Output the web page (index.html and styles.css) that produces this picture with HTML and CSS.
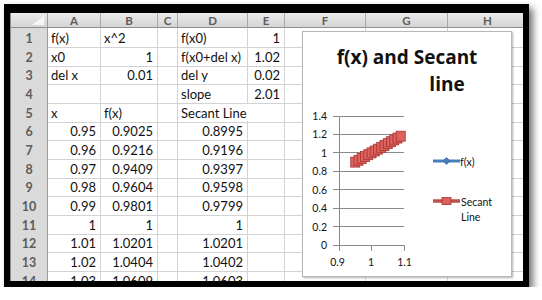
FILE: index.html
```html
<!DOCTYPE html>
<html lang="en">

<head>
    <meta charset="UTF-8">
    <title>f(x) and Secant line</title>
    <link rel="stylesheet" href="styles.css">
</head>

<body>
    <div class="frame">
        <div class="sheet">
            <div class="row head">
                <div class="corner"></div><div>A</div><div>B</div><div>C</div><div>D</div><div>E</div><div>F</div><div>G</div><div>H</div>
            </div>
            <div class="row">
                <div class="num">1</div><div>f(x)</div><div>x^2</div><div></div><div>f(x0)</div><div class="r">1</div><div></div><div></div><div></div>
            </div>
            <div class="row">
                <div class="num">2</div><div>x0</div><div class="r">1</div><div></div><div>f(x0+del x)</div><div class="r">1.02</div><div></div><div></div><div></div>
            </div>
            <div class="row">
                <div class="num">3</div><div>del x</div><div class="r">0.01</div><div></div><div>del y</div><div class="r">0.02</div><div></div><div></div><div></div>
            </div>
            <div class="row">
                <div class="num">4</div><div></div><div></div><div></div><div>slope</div><div class="r">2.01</div><div></div><div></div><div></div>
            </div>
            <div class="row">
                <div class="num">5</div><div>x</div><div>f(x)</div><div></div><div class="spill">Secant Line</div><div></div><div></div><div></div><div></div>
            </div>
            <div class="row">
                <div class="num">6</div><div class="r">0.95</div><div class="r">0.9025</div><div></div><div class="r">0.8995</div><div></div><div></div><div></div><div></div>
            </div>
            <div class="row">
                <div class="num">7</div><div class="r">0.96</div><div class="r">0.9216</div><div></div><div class="r">0.9196</div><div></div><div></div><div></div><div></div>
            </div>
            <div class="row">
                <div class="num">8</div><div class="r">0.97</div><div class="r">0.9409</div><div></div><div class="r">0.9397</div><div></div><div></div><div></div><div></div>
            </div>
            <div class="row">
                <div class="num">9</div><div class="r">0.98</div><div class="r">0.9604</div><div></div><div class="r">0.9598</div><div></div><div></div><div></div><div></div>
            </div>
            <div class="row">
                <div class="num">10</div><div class="r">0.99</div><div class="r">0.9801</div><div></div><div class="r">0.9799</div><div></div><div></div><div></div><div></div>
            </div>
            <div class="row">
                <div class="num">11</div><div class="r">1</div><div class="r">1</div><div></div><div class="r">1</div><div></div><div></div><div></div><div></div>
            </div>
            <div class="row">
                <div class="num">12</div><div class="r">1.01</div><div class="r">1.0201</div><div></div><div class="r">1.0201</div><div></div><div></div><div></div><div></div>
            </div>
            <div class="row">
                <div class="num">13</div><div class="r">1.02</div><div class="r">1.0404</div><div></div><div class="r">1.0402</div><div></div><div></div><div></div><div></div>
            </div>
            <div class="row">
                <div class="num">14</div><div class="r">1.03</div><div class="r">1.0609</div><div></div><div class="r">1.0603</div><div></div><div></div><div></div><div></div>
            </div>
        </div>

        <div class="chart">
            <div class="chart-title">
                <div>f(x) and Secant</div>
                <div class="title-2">line</div>
            </div>
            <svg class="plot" width="208" height="244" viewBox="0 0 208 244">
                <!-- gridlines -->
                <g class="grid">
                    <line x1="36" y1="84.5" x2="101" y2="84.5" />
                    <line x1="36" y1="102.5" x2="101" y2="102.5" />
                    <line x1="36" y1="120.5" x2="101" y2="120.5" />
                    <line x1="36" y1="139.5" x2="101" y2="139.5" />
                    <line x1="36" y1="157.5" x2="101" y2="157.5" />
                    <line x1="36" y1="176.5" x2="101" y2="176.5" />
                    <line x1="36" y1="194.5" x2="101" y2="194.5" />
                </g>
                <!-- axes and ticks -->
                <g class="axis-line">
                    <line x1="36.5" y1="84" x2="36.5" y2="213.5" />
                    <line x1="36" y1="213.5" x2="101.5" y2="213.5" />
                    <line x1="30" y1="84.5" x2="36" y2="84.5" />
                    <line x1="30" y1="102.5" x2="36" y2="102.5" />
                    <line x1="30" y1="120.5" x2="36" y2="120.5" />
                    <line x1="30" y1="139.5" x2="36" y2="139.5" />
                    <line x1="30" y1="157.5" x2="36" y2="157.5" />
                    <line x1="30" y1="176.5" x2="36" y2="176.5" />
                    <line x1="30" y1="194.5" x2="36" y2="194.5" />
                    <line x1="30" y1="213.5" x2="36" y2="213.5" />
                    <line x1="36.5" y1="213" x2="36.5" y2="219" />
                    <line x1="68.5" y1="213" x2="68.5" y2="219" />
                    <line x1="101.5" y1="213" x2="101.5" y2="219" />
                </g>
                <g class="labels y-labels">
                    <text x="24" y="88">1.4</text>
                    <text x="24" y="106">1.2</text>
                    <text x="24" y="124.5">1</text>
                    <text x="24" y="143">0.8</text>
                    <text x="24" y="161.5">0.6</text>
                    <text x="24" y="180">0.4</text>
                    <text x="24" y="198.5">0.2</text>
                    <text x="24" y="217">0</text>
                </g>
                <g class="labels x-labels">
                    <text x="34.5" y="234">0.9</text>
                    <text x="68" y="234">1</text>
                    <text x="101.5" y="234">1.1</text>
                </g>

                <!-- f(x) series -->
                <polyline class="series-fx" points="52.25,129.84 55.5,128.08 58.75,126.31 62,124.51 65.25,122.69 68.5,120.86 71.75,119.01 75,117.14 78.25,115.25 81.5,113.34 84.75,111.42 88,109.47 91.25,107.51 94.5,105.53 97.75,103.53" />

                <!-- secant series -->
                <polyline class="series-sec" points="52.25,130.12 55.5,128.27 58.75,126.42 62,124.56 65.25,122.71 68.5,120.86 71.75,119.01 75,117.16 78.25,115.3 81.5,113.45 84.75,111.6 88,109.75 91.25,107.9 94.5,106.04 97.75,104.19" />
                <g class="marks-sec">
                    <rect x="47.75" y="125.12" width="9" height="10" />
                    <rect x="51" y="123.27" width="9" height="10" />
                    <rect x="54.25" y="121.42" width="9" height="10" />
                    <rect x="57.5" y="119.56" width="9" height="10" />
                    <rect x="60.75" y="117.71" width="9" height="10" />
                    <rect x="64" y="115.86" width="9" height="10" />
                    <rect x="67.25" y="114.01" width="9" height="10" />
                    <rect x="70.5" y="112.16" width="9" height="10" />
                    <rect x="73.75" y="110.3" width="9" height="10" />
                    <rect x="77" y="108.45" width="9" height="10" />
                    <rect x="80.25" y="106.6" width="9" height="10" />
                    <rect x="83.5" y="104.75" width="9" height="10" />
                    <rect x="86.75" y="102.9" width="9" height="10" />
                    <rect x="90" y="101.04" width="9" height="10" />
                    <rect x="93.25" y="99.19" width="9" height="10" />
                </g>

                <!-- legend -->
                <line class="series-fx" x1="130" y1="129" x2="157" y2="129" />
                <polygon class="mark-fx" points="143.5,125.5 147,129 143.5,132.5 140,129" />
                <text class="legend" x="157" y="133.5">f(x)</text>

                <line class="series-sec" x1="130" y1="169" x2="157" y2="169" />
                <rect class="mark-legend" x="139" y="165.5" width="9" height="7" />
                <text class="legend" x="158" y="174">Secant</text>
                <text class="legend" x="158" y="189">Line</text>
            </svg>
        </div>
    </div>
</body>

</html>
```

FILE: styles.css
```css
* {
    margin: 0;
    padding: 0;
    box-sizing: border-box;
}

body {
    background-color: #fff;
    font-family: Lato, 'Liberation Sans', sans-serif;
    color: #111;
}

.frame {
    position: relative;
    width: 525px;
    height: 283px;
    margin: 4px 0 0 4px;
    border: 6px solid #000;
    border-top-width: 9px;
    background-color: #fff;
    box-shadow: 4px 4px 7px rgba(0, 0, 0, 0.55);
    overflow: hidden;
}

.sheet {
    border-left: 1px solid #8e8e8e;
}

.row {
    display: grid;
    grid-template-columns: 37px 53px 57px 20px 70px 37px 81px 82px 80px;
    height: 18.67px;
}

.row > div {
    border-right: 1px solid #d3d3d3;
    border-bottom: 1px solid #d3d3d3;
    padding: 2px 4px 0 3px;
    font-size: 13px;
    line-height: 17px;
    white-space: nowrap;
}

.row > .r {
    text-align: right;
}

.row > .spill {
    border-right-color: transparent;
}

.row > .num {
    padding: 2px 0 0;
    background-color: #dadada;
    border-right-color: #9c9c9c;
    border-bottom-color: #b0b0b0;
    color: #5c5c5c;
    font-size: 12.5px;
    font-weight: bold;
    text-align: center;
}

.head {
    height: 15px;
}

.head > div {
    padding: 1px 0 0;
    background: linear-gradient(#ebebeb, #d5d5d5);
    border-right-color: #a9a9a9;
    border-bottom-color: #8f8f8f;
    color: #5c5c5c;
    font-size: 11.5px;
    font-weight: bold;
    line-height: 13px;
    text-align: center;
}

.head > .corner {
    position: relative;
    border-right-color: #9c9c9c;
}

.corner::after {
    content: '';
    position: absolute;
    right: 3px;
    bottom: 2px;
    width: 12px;
    height: 9px;
    background: linear-gradient(to top left, #f6f6f6 50%, transparent 51%);
}

/* chart sitting over columns F to H */
.chart {
    position: absolute;
    left: 292px;
    top: 18px;
    width: 210px;
    height: 246px;
    background-color: #fff;
    border: 1px solid #b8b8b8;
    box-shadow: 1px 1px 2px rgba(0, 0, 0, 0.3);
}

.chart-title {
    padding-top: 12px;
    font-family: 'Open Sans', sans-serif;
    font-size: 19px;
    font-weight: bold;
    line-height: 27px;
    text-align: center;
    color: #111;
}

.title-2 {
    padding-left: 80px;
}

.plot {
    position: absolute;
    left: 0;
    top: 0;
}

.grid line,
.axis-line line {
    stroke: #8a8a8a;
    stroke-width: 1;
}

.labels text,
.legend {
    font-family: Lato, sans-serif;
    font-size: 10.5px;
    fill: #111;
}

.y-labels text {
    text-anchor: end;
}

.x-labels text {
    text-anchor: middle;
}

.series-fx {
    fill: none;
    stroke: #4a7ebb;
    stroke-width: 3;
}

.mark-fx {
    fill: #4a7ebb;
    stroke: #3a6aa5;
    stroke-width: 0.8;
}

.series-sec {
    fill: none;
    stroke: #c0504d;
    stroke-width: 3.5;
}

.marks-sec rect,
.mark-legend {
    fill: #dd625e;
    stroke: #a5322f;
    stroke-width: 0.8;
}
```
